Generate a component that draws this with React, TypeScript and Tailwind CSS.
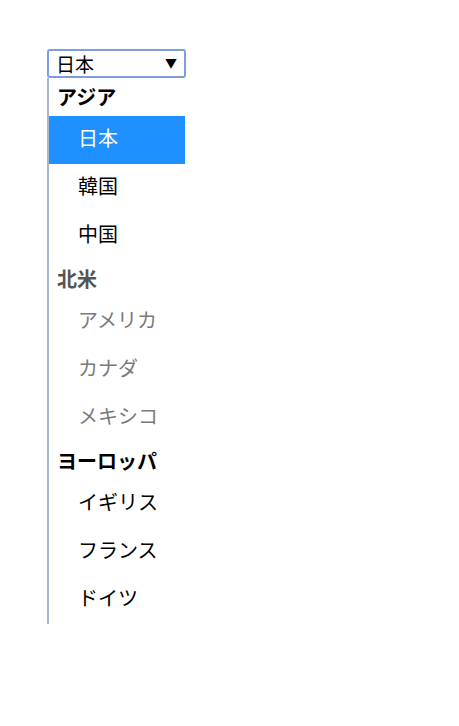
import React from "react";

type Group = { label: string; disabled?: boolean; options: string[] };

const groups: Group[] = [
  { label: "アジア", options: ["日本", "韓国", "中国"] },
  { label: "北米", disabled: true, options: ["アメリカ", "カナダ", "メキシコ"] },
  { label: "ヨーロッパ", options: ["イギリス", "フランス", "ドイツ"] },
];

const App = () => {
  const selected = "日本";
  return (
    <div
      className="min-h-[726px] bg-white pt-[49px] pl-[47px]"
      style={{ fontFamily: '"Noto Sans CJK JP", "Noto Sans", sans-serif' }}
    >
      {/* select box */}
      <div className="w-[139px] h-[29px] border-2 border-[#7e9ddc] rounded-[3px] flex items-center justify-between pl-[7px] pr-[7px] text-[19px] leading-none text-black">
        <span>{selected}</span>
        <span className="text-[12px] pb-px">▼</span>
      </div>

      {/* open list */}
      <ul className="w-[139px] border-l-2 border-[#a9b7cc]">
        {groups.map((g) => (
          <li key={g.label}>
            <div
              className={`h-[38px] flex items-center pl-[8px] text-[20px] leading-none font-bold ${
                g.disabled ? "text-[#555555]" : "text-black"
              }`}
            >
              {g.label}
            </div>
            <ul>
              {g.options.map((o) => (
                <li
                  key={o}
                  className={`h-[48px] mr-px flex items-center pl-[29px] pb-[4px] text-[20px] leading-none ${
                    o === selected
                      ? "bg-[#1e90ff] text-white"
                      : g.disabled
                      ? "text-[#7a7a7a]"
                      : "text-black"
                  }`}
                >
                  {o}
                </li>
              ))}
            </ul>
          </li>
        ))}
      </ul>
    </div>
  );
};

export default App;
